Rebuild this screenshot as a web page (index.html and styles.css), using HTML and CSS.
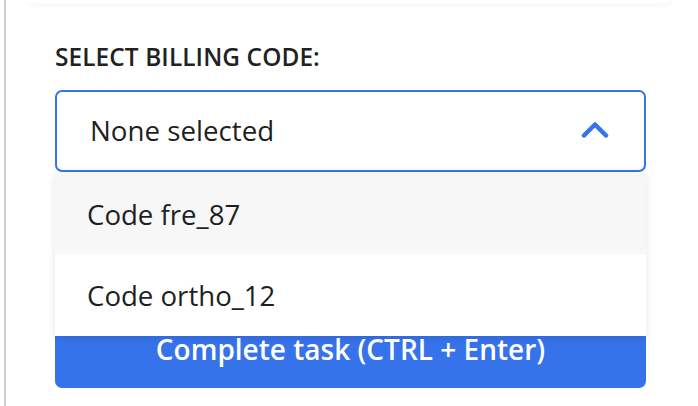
FILE: index.html
```html
<!DOCTYPE html>
<html>
<head>
<meta charset="utf-8">
<link rel="stylesheet" href="styles.css">
</head>
<body>
<div class="page">
  <div class="topcard"></div>
  <div class="form">
    <div class="label">SELECT BILLING CODE:</div>
    <div class="field">
      <div class="select">
        <span class="value">None selected</span>
        <svg class="chev" width="28" height="18" viewBox="0 0 28 18"><path d="M3 14.5 L14 3.5 L25 14.5" fill="none" stroke="#3574ea" stroke-width="4.5" stroke-linecap="round" stroke-linejoin="round"/></svg>
      </div>
      <ul class="menu">
        <li class="item hover">Code fre_87</li>
        <li class="item">Code ortho_12</li>
      </ul>
    </div>
    <button class="btn">Complete task (CTRL + Enter)</button>
  </div>
</div>
</body>
</html>
```

FILE: styles.css
```css
html, body {
  margin: 0;
  padding: 0;
  background: #fff;
  height: 100%;
  overflow: hidden;
}
body {
  font-family: "Open Sans", "Noto Sans", sans-serif;
  color: #1f1f1f;
}
.page {
  margin-left: 4px;
  border-left: 2px solid #cfcfcf;
  height: 100%;
  box-sizing: border-box;
}
.topcard {
  height: 3px;
  margin: 0 28px 0 21px;
  background: #fff;
  box-shadow: 0 1px 6px rgba(0,0,0,0.08);
  border-radius: 0 0 4px 4px;
}
.form {
  width: 591px;
  margin-left: 49px;
}
.label {
  margin-top: 37px;
  font-size: 24.4px;
  font-weight: 600;
  line-height: 33px;
  letter-spacing: 0.1px;
  color: #222;
}
.field {
  position: relative;
  margin-top: 17px;
}
.select {
  height: 82px;
  box-sizing: border-box;
  border: 2px solid #3574ea;
  border-radius: 7px;
  display: flex;
  align-items: center;
  justify-content: space-between;
  padding: 0 35px 0 33px;
  font-size: 27.7px;
  color: #1f1f1f;
}
.value { padding-bottom: 2px; }
.chev { display: block; margin-top: -2px; }
.menu {
  position: absolute;
  top: 83px;
  left: 0;
  right: 0;
  margin: 0;
  padding: 0;
  list-style: none;
  background: #fff;
  box-shadow: 0 2px 8px rgba(0,0,0,0.10);
  z-index: 2;
}
.item {
  height: 82px;
  display: flex;
  align-items: center;
  padding-left: 32px;
  font-size: 27.6px;
  color: #1f1f1f;
}
.item.hover { background: #f7f7f7; height: 81px; }
.btn {
  display: block;
  width: 100%;
  margin-top: 140px;
  height: 76px;
  border: none;
  border-radius: 7px;
  background: #3672ea;
  color: #fff;
  font-family: "Open Sans", "Noto Sans", sans-serif;
  font-size: 28px;
  font-weight: 600;
  padding: 0 0 2px;
}
```
